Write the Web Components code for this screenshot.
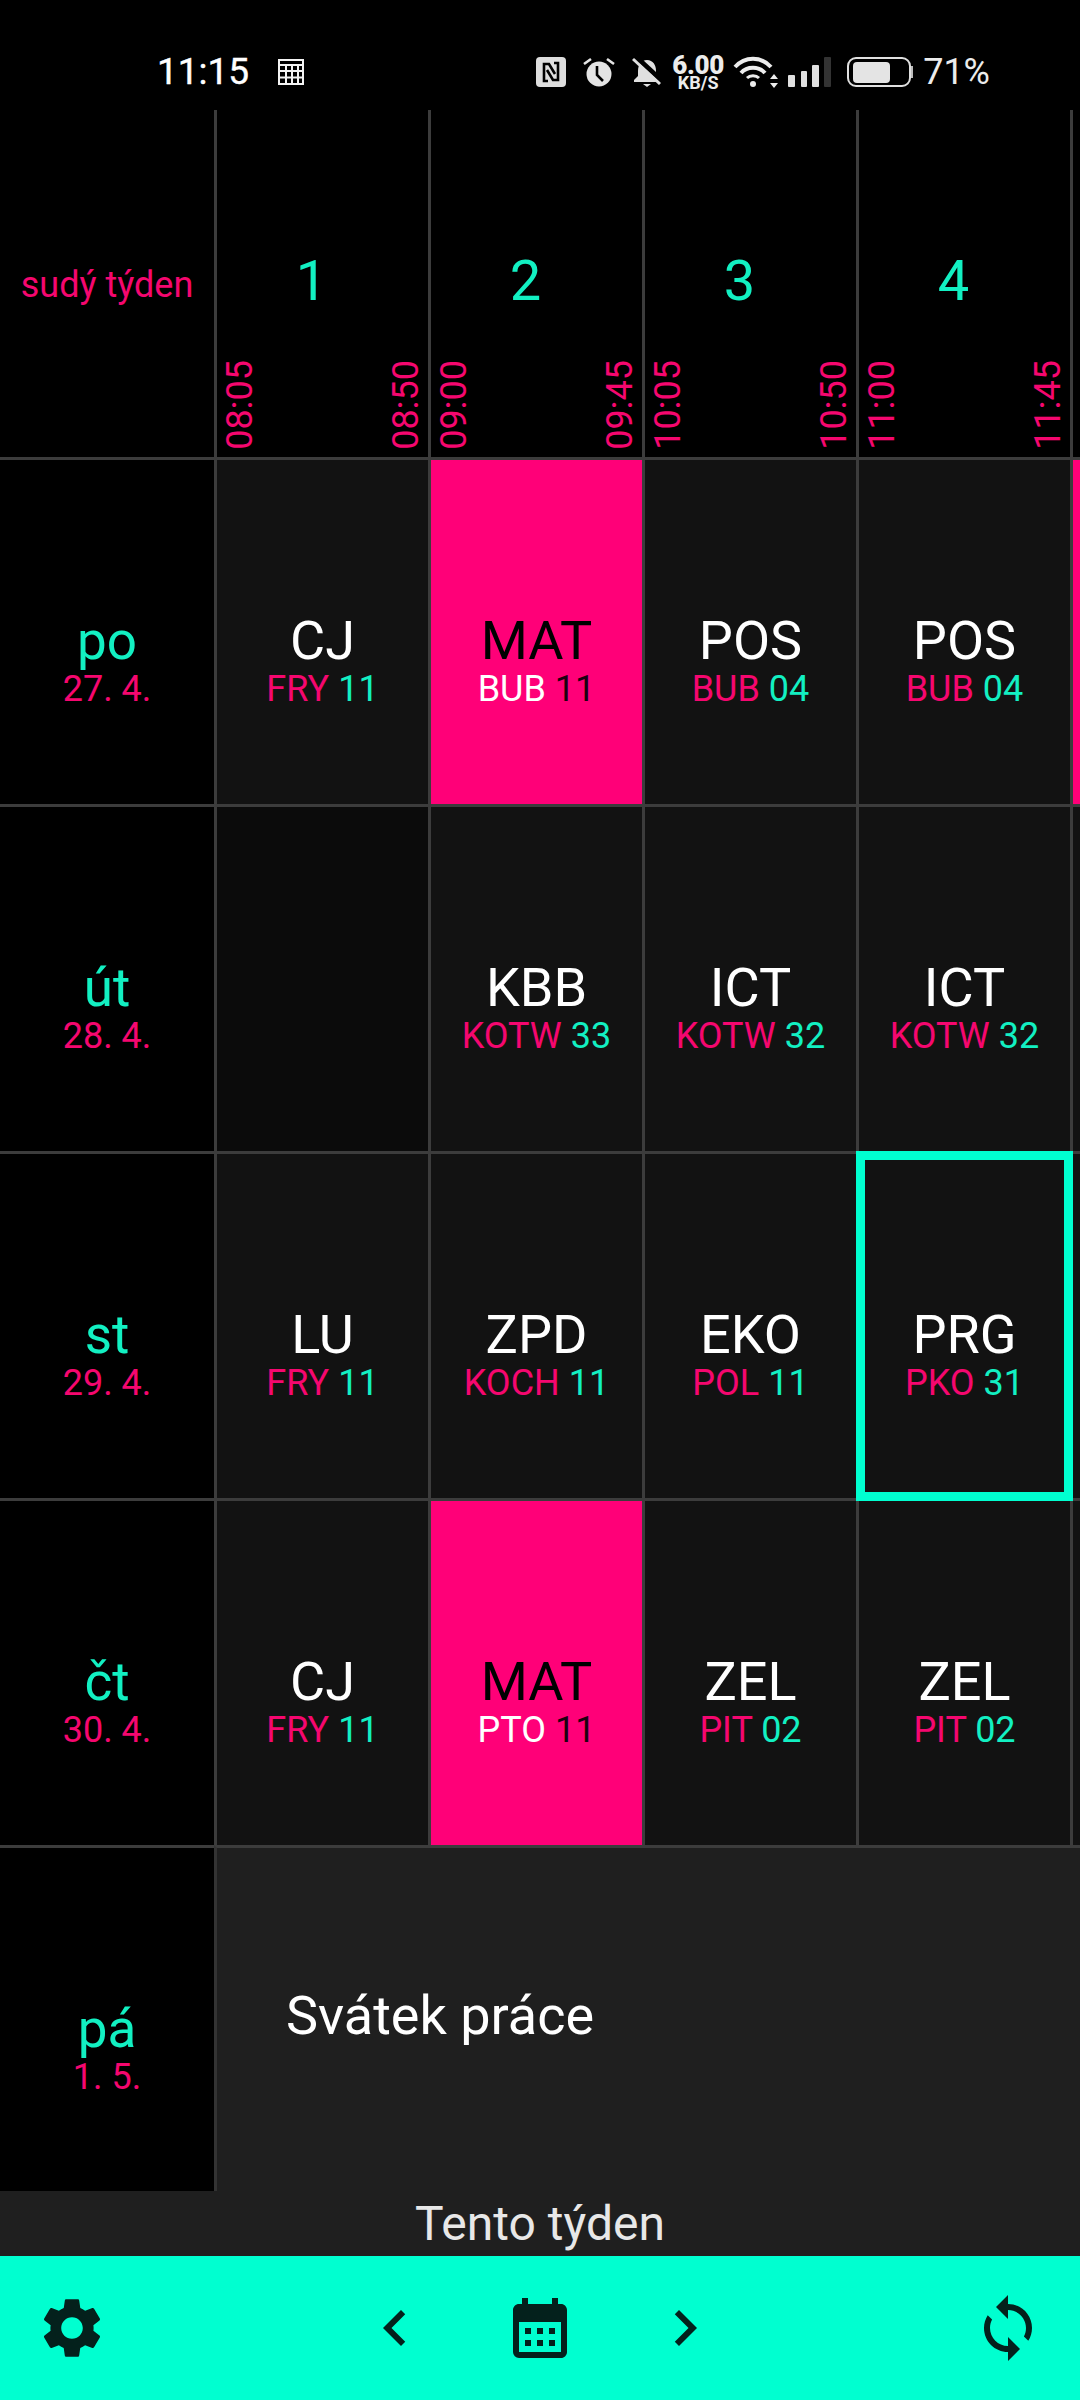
<!DOCTYPE html>
<html lang="cs">
<head>
<meta charset="utf-8">
<title>Rozvrh</title>
<style>
  html, body { margin: 0; background: #000; }
  body { width: 1080px; height: 2400px; overflow: hidden; font-family: Roboto, "Liberation Sans", sans-serif; }
</style>
</head>
<body>
<tt-app>
  <tt-status slot="status"></tt-status>
  <tt-table slot="table">
    <tt-week>sudý týden</tt-week>
    <tt-period num="1" from="08:05" to="08:50"></tt-period>
    <tt-period num="2" from="09:00" to="09:45"></tt-period>
    <tt-period num="3" from="10:05" to="10:50"></tt-period>
    <tt-period num="4" from="11:00" to="11:45"></tt-period>
    <tt-period></tt-period>

    <tt-day date="27. 4.">po</tt-day>
    <tt-lesson teacher="FRY" room="11">CJ</tt-lesson>
    <tt-lesson teacher="BUB" room="11" kind="exam">MAT</tt-lesson>
    <tt-lesson teacher="BUB" room="04">POS</tt-lesson>
    <tt-lesson teacher="BUB" room="04">POS</tt-lesson>
    <tt-lesson kind="exam"></tt-lesson>

    <tt-day date="28. 4.">út</tt-day>
    <tt-lesson kind="empty"></tt-lesson>
    <tt-lesson teacher="KOTW" room="33">KBB</tt-lesson>
    <tt-lesson teacher="KOTW" room="32">ICT</tt-lesson>
    <tt-lesson teacher="KOTW" room="32">ICT</tt-lesson>
    <tt-lesson></tt-lesson>

    <tt-day date="29. 4.">st</tt-day>
    <tt-lesson teacher="FRY" room="11">LU</tt-lesson>
    <tt-lesson teacher="KOCH" room="11">ZPD</tt-lesson>
    <tt-lesson teacher="POL" room="11">EKO</tt-lesson>
    <tt-lesson teacher="PKO" room="31" current>PRG</tt-lesson>
    <tt-lesson></tt-lesson>

    <tt-day date="30. 4.">čt</tt-day>
    <tt-lesson teacher="FRY" room="11">CJ</tt-lesson>
    <tt-lesson teacher="PTO" room="11" kind="exam">MAT</tt-lesson>
    <tt-lesson teacher="PIT" room="02">ZEL</tt-lesson>
    <tt-lesson teacher="PIT" room="02">ZEL</tt-lesson>
    <tt-lesson></tt-lesson>

    <tt-day date="1. 5.">pá</tt-day>
    <tt-holiday>Svátek práce</tt-holiday>
  </tt-table>
  <tt-caption slot="caption">Tento týden</tt-caption>
  <tt-toolbar slot="toolbar"></tt-toolbar>
</tt-app>

<script>
const LINE = '#3c3c3c';
const PINK = '#f5076f';
const TEAL = '#12f0c2';

function define(name, html, setup) {
	const template = document.createElement('template');
	template.innerHTML = html;
	customElements.define(name, class extends HTMLElement {
		constructor() {
			super();
			this.attachShadow({ mode: 'open' });
			this.shadowRoot.appendChild(template.content.cloneNode(true));
		}
		connectedCallback() {
			if (setup) setup(this, this.shadowRoot);
		}
	});
}

define('tt-app', `
<style>
  :host { display: flex; flex-direction: column; width: 1080px; height: 2400px; background: #1f1f1f; }
</style>
<slot name="status"></slot>
<slot name="table"></slot>
<slot name="caption"></slot>
<slot name="toolbar"></slot>
`);

define('tt-status', `
<style>
  :host {
    display: flex;
    align-items: center;
    box-sizing: border-box;
    width: 1080px;
    height: 110px;
    padding: 34px 90px 0 157px;
    background: #000;
    color: #ececec;
    font-family: Roboto, sans-serif;
  }
  svg { display: block; flex: none; }
  .time { font-size: 37px; line-height: 40px; color: #fff; -webkit-text-stroke: 0.4px #fff; }
  .cal { margin-left: 29px; }
  .right { display: flex; align-items: center; margin-left: auto; }
  .speed { display: flex; flex-direction: column; align-items: center; width: 52px; margin: 0 9px 0 10px; font-weight: 700; }
  .speed b { font-size: 26px; line-height: 21px; letter-spacing: -0.3px; }
  .speed i { font-size: 18px; line-height: 14px; font-style: normal; }
  .pct { margin-left: 10px; font-size: 36px; line-height: 40px; }
</style>
<span class="time">11:15</span>
<svg class="cal" width="26" height="26" viewBox="0 0 26 26" fill="none" stroke="#f4f4f4" stroke-width="2"><path d="M1 1h24v24H1zM1 6h24M8 6v19M14 6v19M20 6v19M1 12h24M1 18.500h24"/></svg>
<div class="right">
  <svg width="30" height="30" viewBox="0 0 30 30"><rect width="30" height="30" rx="4" fill="#dedede"/><path d="M12 24H8V7h5l6 10M18 6h4v17h-5l-6-10" fill="none" stroke="#000" stroke-width="2.600"/></svg>
  <svg style="margin-left:17px" width="32" height="30" viewBox="0 0 32 30"><circle cx="16" cy="17" r="12.500" fill="#e4e4e4"/><path d="M1 7l7-5M31 7l-7-5" stroke="#e4e4e4" stroke-width="2.600"/><path d="M14 9v9l6 6" fill="none" stroke="#000" stroke-width="2.600"/></svg>
  <svg style="margin-left:17px" width="30" height="30" viewBox="0 0 30 30"><path d="M15 3c6 0 9 5 9 11v5l4 4v2H2v-2l4-4v-5C6 8 9 3 15 3z" fill="#e0e0e0"/><path d="M11 27h8l-4 3z" fill="#e0e0e0"/><path d="M3 -1l27 25" stroke="#000" stroke-width="5"/><path d="M1 2l27 25" stroke="#e0e0e0" stroke-width="3"/></svg>
  <div class="speed"><b>6.00</b><i>KB/S</i></div>
  <svg width="45" height="32" viewBox="0 0 45 32" fill="none" stroke="#ececec"><path d="M2 11C12 0 28 0 38 11" stroke-width="4"/><path d="M8 17C14 10 26 10 32 17" stroke-width="4"/><path d="M14 22C17 19 23 19 26 22" stroke-width="3"/><circle cx="20" cy="28" r="3" fill="#ececec" stroke="none"/><path d="M41 18l4 5h-8zM41 32l4-5h-8z" fill="#ececec" stroke="none"/></svg>
  <svg style="margin-left:10px" width="44" height="30" viewBox="0 0 44 30"><rect y="18" width="7" height="12" rx="1" fill="#e0e0e0"/><rect x="13" y="14" width="6" height="16" rx="1" fill="#e0e0e0"/><rect x="24" y="8" width="7" height="22" rx="1" fill="#e0e0e0"/><rect x="36" width="7" height="30" rx="1" fill="#333"/></svg>
  <svg style="margin-left:15px" width="66" height="30" viewBox="0 0 66 30"><rect x="1" y="1" width="62" height="28" rx="8" fill="none" stroke="#e0e0e0" stroke-width="2"/><rect x="6" y="5" width="37" height="21" rx="4" fill="#e4e4e4"/><rect x="64" y="9" width="2" height="12" fill="#bbb"/></svg>
  <span class="pct">71%</span>
</div>
`);

define('tt-table', `
<style>
  :host {
    display: grid;
    grid-template-columns: repeat(6, 214px);
    grid-template-rows: repeat(5, 347px) 346px;
    width: 1080px;
    height: 2081px;
    overflow: hidden;
    background: #000;
    font-family: Roboto, sans-serif;
  }
</style>
<slot></slot>
`);

define('tt-week', `
<style>
  :host {
    display: flex;
    align-items: center;
    justify-content: center;
    padding-top: 2px;
    font-size: 36px;
    color: ${PINK};
    white-space: nowrap;
  }
</style>
<slot></slot>
`);

define('tt-period', `
<style>
  :host {
    position: relative;
    display: flex;
    flex-direction: column;
    box-sizing: border-box;
    border-left: 3px solid ${LINE};
  }
  .num {
    box-sizing: border-box;
    height: 250px;
    padding: 143px 22px 0 0;
    font-size: 56px;
    line-height: 56px;
    text-align: center;
    color: ${TEAL};
  }
  .times { display: flex; justify-content: space-between; padding: 0 8px 0 10px; }
  .times span {
    writing-mode: vertical-rl;
    transform: rotate(180deg);
    font-size: 36px;
    line-height: 27px;
    color: ${PINK};
  }
</style>
<div class="num"></div>
<div class="times"><span class="from"></span><span class="to"></span></div>
`, (el, root) => {
	root.querySelector('.num').textContent = el.getAttribute('num') || '';
	root.querySelector('.from').textContent = el.getAttribute('from') || '';
	root.querySelector('.to').textContent = el.getAttribute('to') || '';
});

define('tt-day', `
<style>
  :host {
    display: flex;
    flex-direction: column;
    align-items: center;
    box-sizing: border-box;
    border-top: 3px solid ${LINE};
    padding-top: 155px;
    background: #000;
  }
  .name { font-size: 53px; line-height: 52px; color: ${TEAL}; }
  .date { font-size: 36px; line-height: 30px; color: ${PINK}; margin-top: 7px; }
</style>
<span class="name"><slot></slot></span>
<span class="date"></span>
`, (el, root) => {
	root.querySelector('.date').textContent = el.getAttribute('date');
});

define('tt-lesson', `
<style>
  :host {
    position: relative;
    display: flex;
    flex-direction: column;
    align-items: center;
    box-sizing: border-box;
    border-top: 3px solid ${LINE};
    border-left: 3px solid ${LINE};
    padding-top: 155px;
    background: #121212;
    color: #fff;
  }
  :host([kind="exam"]) { background: #ff0078; color: #000; }
  :host([kind="empty"]) { background: #0b0b0b; }
  :host([current])::after {
    content: "";
    position: absolute;
    z-index: 1;
    inset: -3px;
    border: 9px solid #00ffd0;
  }
  .subject { font-size: 54px; line-height: 52px; }
  .sub { font-size: 36px; line-height: 30px; margin-top: 7px; white-space: nowrap; }
  .teacher { color: ${PINK}; }
  .room { color: ${TEAL}; }
  :host([kind="exam"]) .teacher { color: #fff; }
  :host([kind="exam"]) .room { color: #1c0010; }
</style>
<span class="subject"><slot></slot></span>
<span class="sub"><span class="teacher"></span> <span class="room"></span></span>
`, (el, root) => {
	root.querySelector('.teacher').textContent = el.getAttribute('teacher') || '';
	root.querySelector('.room').textContent = el.getAttribute('room') || '';
});

define('tt-holiday', `
<style>
  :host {
    grid-column: 2 / -1;
    display: flex;
    align-items: center;
    box-sizing: border-box;
    border-top: 3px solid ${LINE};
    border-left: 3px solid #333;
    padding: 0 0 8px 69px;
    background: #1f1f1f;
    color: #fff;
    font-size: 54px;
  }
</style>
<slot></slot>
`);

define('tt-caption', `
<style>
  :host {
    display: block;
    height: 65px;
    background: #1f1f1f;
    color: #e8e8e8;
    font-family: Roboto, sans-serif;
    font-size: 48px;
    line-height: 65px;
    text-align: center;
  }
</style>
<slot></slot>
`);

define('tt-toolbar', `
<style>
  :host {
    display: flex;
    align-items: center;
    justify-content: space-between;
    box-sizing: border-box;
    height: 144px;
    padding: 0 36px;
    background: #00ffd0;
  }
  svg { display: block; width: 72px; height: 72px; fill: #04211c; }
  .mid { display: flex; gap: 73px; }
</style>
<svg viewBox="0 0 24 24"><path d="M19.14 12.94c.04-.3.06-.61.06-.94 0-.32-.02-.64-.07-.94l2.03-1.58c.18-.14.23-.41.12-.61l-1.92-3.32c-.12-.22-.37-.29-.59-.22l-2.39.96c-.5-.38-1.03-.7-1.62-.94l-.36-2.54c-.04-.24-.24-.41-.48-.41h-3.84c-.24 0-.43.17-.47.41l-.36 2.54c-.59.24-1.13.57-1.62.94l-2.39-.96c-.22-.08-.47 0-.59.22L2.74 8.87c-.12.21-.08.47.12.61l2.03 1.58c-.05.3-.09.63-.09.94s.02.64.07.94l-2.03 1.58c-.18.14-.23.41-.12.61l1.92 3.32c.12.22.37.29.59.22l2.39-.96c.5.38 1.03.7 1.62.94l.36 2.54c.05.24.24.41.48.41h3.84c.24 0 .44-.17.47-.41l.36-2.54c.59-.24 1.13-.56 1.62-.94l2.39.96c.22.08.47 0 .59-.22l1.92-3.32c.12-.22.07-.47-.12-.61l-2.01-1.58zM12 15.600c-1.98 0-3.600-1.620-3.600-3.600s1.620-3.600 3.600-3.600 3.600 1.620 3.600 3.600-1.620 3.600-3.600 3.600z"/></svg>
<div class="mid">
  <svg viewBox="0 0 24 24"><path d="M15.410 7.410 14 6l-6 6 6 6 1.410-1.410L10.830 12z"/></svg>
  <svg viewBox="0 0 24 24"><path d="M19 4h-1V2h-2v2H8V2H6v2H5c-1.110 0-2 .9-2 2v14a2 2 0 0 0 2 2h14c1.100 0 2-.9 2-2V6c0-1.100-.9-2-2-2zm0 16H5V10h14zM9 14H7v-2h2zm4 0h-2v-2h2zm4 0h-2v-2h2zm-8 4H7v-2h2zm4 0h-2v-2h2zm4 0h-2v-2h2z"/></svg>
  <svg viewBox="0 0 24 24"><path d="M8.590 16.590 10 18l6-6-6-6-1.410 1.410L13.170 12z"/></svg>
</div>
<svg viewBox="0 0 24 24"><path d="M12 4V1L8 5l4 4V6c3.310 0 6 2.690 6 6 0 1.010-.25 1.970-.7 2.800l1.460 1.460C19.540 15.030 20 13.570 20 12c0-4.420-3.58-8-8-8zm0 14c-3.310 0-6-2.690-6-6 0-1.010.25-1.970.7-2.800L5.240 7.740C4.460 8.970 4 10.430 4 12c0 4.420 3.58 8 8 8v3l4-4-4-4z"/></svg>
`);
</script>
</body>
</html>
